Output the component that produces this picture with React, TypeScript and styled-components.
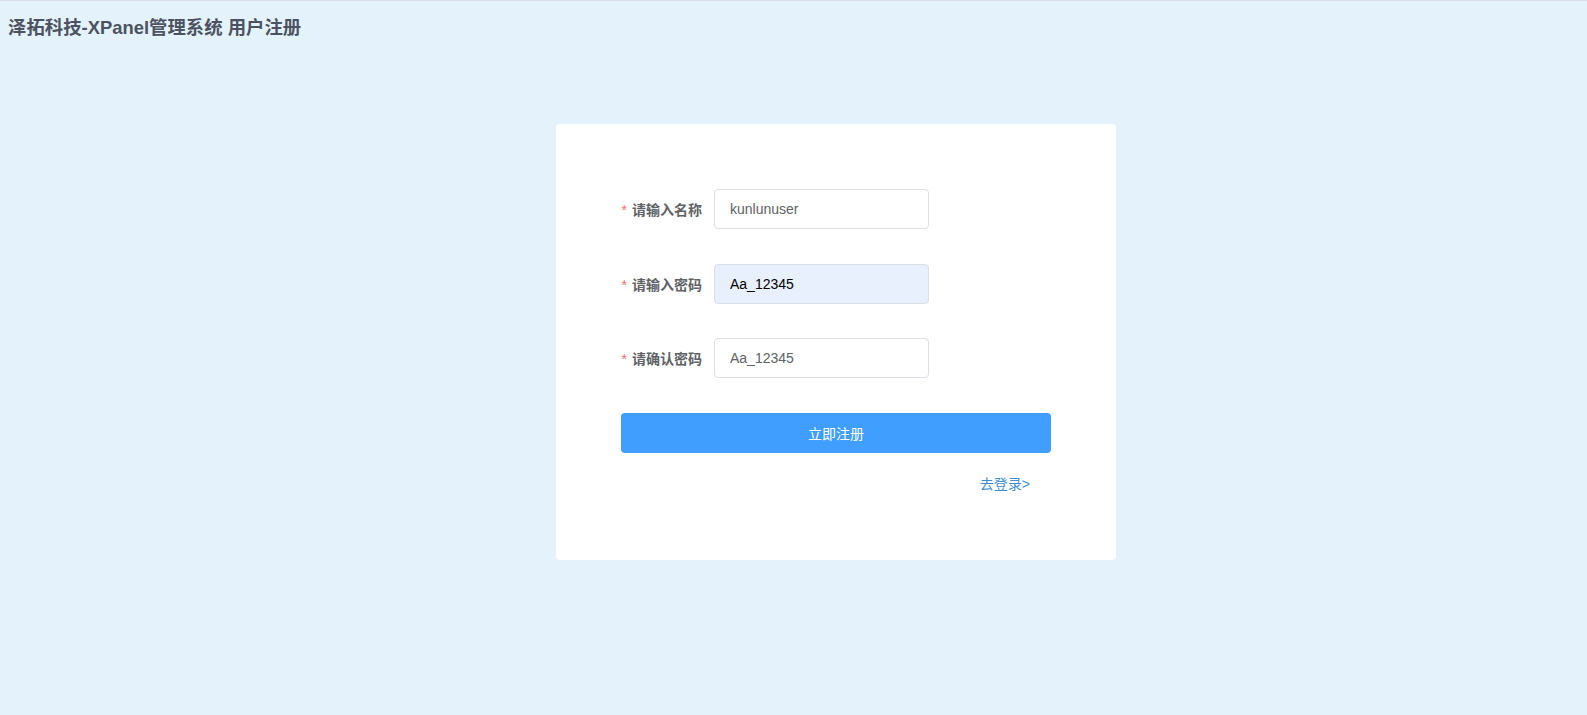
import React from "react";
import styled, { createGlobalStyle } from "styled-components";

const GlobalStyle = createGlobalStyle`
  html, body {
    margin: 0;
    padding: 0;
  }
  body {
    font-family: "Liberation Sans", "Noto Sans CJK SC", sans-serif;
    background: #e4f3fb;
  }
  * { box-sizing: border-box; }
`;

const Page = styled.div`
  min-height: 715px;
  background: #e4f3fb;
  border-top: 1px solid #dcdfe6;
`;

const Header = styled.header`
  height: 54px;
  padding: 15px 0 0 8px;
`;

const Title = styled.h1`
  margin: 0;
  font-size: 18.4px;
  line-height: 24px;
  font-weight: 700;
  color: #4c5261;
`;

const Main = styled.main`
  display: flex;
  padding: 69px 0 0 556px;
`;

const Card = styled.section`
  width: 560px;
  height: 436px;
  background: #ffffff;
  border-radius: 4px;
  padding: 65px 65px 0 65px;
  display: flex;
  flex-direction: column;
`;

const Row = styled.div`
  display: grid;
  grid-template-columns: 93px 215px;
  align-items: center;
  height: 40px;
  margin-bottom: 34.5px;
`;

const Label = styled.label`
  text-align: right;
  padding-right: 12px;
  font-size: 14px;
  font-weight: 700;
  color: #606266;
  white-space: nowrap;
`;

const Star = styled.span`
  color: #f56c6c;
  font-weight: 400;
  margin-right: 5px;
`;

const Input = styled.input<{ $filled?: boolean }>`
  width: 215px;
  height: 40px;
  border: 1px solid #dcdfe6;
  border-radius: 4px;
  padding: 0 15px;
  font-family: "Liberation Sans", "Noto Sans CJK SC", sans-serif;
  font-size: 14px;
  color: ${(p) => (p.$filled ? "#000000" : "#606266")};
  background: ${(p) => (p.$filled ? "#e8f0fe" : "#ffffff")};
  outline: none;
`;

const Button = styled.button`
  width: 430px;
  height: 40px;
  border: none;
  border-radius: 4px;
  background: #409eff;
  color: #ffffff;
  font-family: "Liberation Sans", "Noto Sans CJK SC", sans-serif;
  font-size: 14px;
  cursor: pointer;
`;

const LinkRow = styled.div`
  width: 430px;
  display: flex;
  justify-content: flex-end;
  padding-right: 21px;
  margin-top: 22px;
`;

const Link = styled.a`
  font-size: 14px;
  line-height: 18px;
  color: #3d8fd1;
  text-decoration: none;
  cursor: pointer;
`;

const fields = [
  { label: "请输入名称", value: "kunlunuser", filled: false },
  { label: "请输入密码", value: "Aa_12345", filled: true },
  { label: "请确认密码", value: "Aa_12345", filled: false },
];

export default function App() {
  return (
    <>
      <GlobalStyle />
      <Page>
        <Header>
          <Title>泽拓科技-XPanel管理系统 用户注册</Title>
        </Header>
        <Main>
          <Card>
            {fields.map((f) => (
              <Row key={f.label}>
                <Label>
                  <Star>*</Star>
                  {f.label}
                </Label>
                <Input $filled={f.filled} type="text" defaultValue={f.value} />
              </Row>
            ))}
            <Button>立即注册</Button>
            <LinkRow>
              <Link>去登录&gt;</Link>
            </LinkRow>
          </Card>
        </Main>
      </Page>
    </>
  );
}
